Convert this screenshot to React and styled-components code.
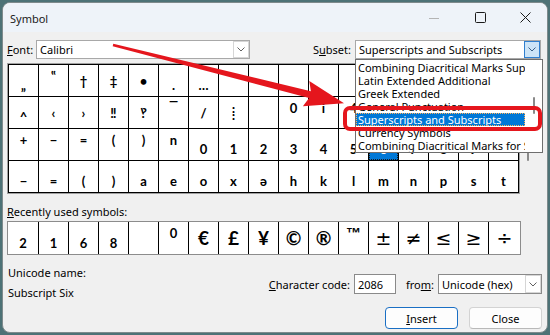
import React from 'react';
import styled, { createGlobalStyle } from 'styled-components';

const Global = createGlobalStyle`
  html, body { margin: 0; padding: 0; }
  body {
    background: #4d7276;
    width: 550px; height: 335px; overflow: hidden;
    font-family: "Noto Sans", "Open Sans", sans-serif;
  }
`;

const UI = `"Segoe UI", "Noto Sans", "Open Sans", sans-serif`;
const GLYPH = `Lato, "DejaVu Sans", sans-serif`;

const Page = styled.div`
  position: relative;
  width: 550px; height: 335px;
  padding: 2px;
  box-sizing: border-box;
`;

const Window = styled.div`
  width: 546px; height: 331px;
  box-sizing: border-box;
  border: 1px solid #7e8a8c;
  border-radius: 8px;
  overflow: hidden;
  background: #f0f0f0;
  display: flex; flex-direction: column;
  font-family: ${UI};
  font-size: 11px;
  color: #000;
`;

const TitleBar = styled.div`
  height: 29px; flex: none;
  display: flex; align-items: center;
  background: #eef3f9;
  padding-left: 7px;
`;
const Title = styled.div`
  flex: 1;
  font-size: 11px;
  color: #1a1a1a;
  margin-top: 1px;
`;
const WinBtn = styled.div`
  width: ${p => p.$w || 46}px; height: 29px;
  display: flex; align-items: center; justify-content: center;
`;

const Body = styled.div`
  flex: 1;
  display: flex; flex-direction: column;
  padding: 0 5px 0 4px;
`;

const TopRow = styled.div`
  margin-top: 8px;
  height: 19px;
  display: flex; align-items: center; justify-content: space-between;
`;
const Group = styled.div`
  display: flex; align-items: center;
`;
const Label = styled.span`
  margin-right: ${p => p.$mr ?? 3}px;
  white-space: nowrap;
`;

const Combo = styled.div`
  display: flex; align-items: stretch;
  width: ${p => p.$w}px; height: ${p => p.$h || 19}px;
  box-sizing: border-box;
  background: #fff;
  border: 1px solid ${p => p.$dark ? '#8a8a8a' : '#a8a8a8'};
  margin-right: ${p => p.$mr || 0}px;
`;
const ComboText = styled.div`
  flex: 1;
  padding-left: 3px;
  display: flex; align-items: center;
  white-space: nowrap; overflow: hidden;
`;
const ComboButton = styled.div`
  width: 16px;
  display: flex; align-items: center; justify-content: center;
  box-sizing: border-box;
  background: ${p => p.$active ? '#cce4f7' : '#fff'};
  border: 1px solid ${p => p.$active ? '#2f7fcf' : '#d6d6d6'};
`;

const Chevron = ({ color = '#606060' }) => (
  <svg width="8" height="5" viewBox="0 0 8 5">
    <path d="M0.5 0.5 L4 4 L7.5 0.5" fill="none" stroke={color} strokeWidth="1" />
  </svg>
);

const GridSection = styled.div`
  margin-top: 4px;
  display: flex;
`;
const GridFrame = styled.div`
  border: 1px solid #a0a0a0;
  flex: none;
`;
const Grid = styled.div`
  display: grid;
  grid-template-columns: repeat(17, 29px);
  grid-auto-rows: 31px;
  gap: 1px;
  background: #000;
  border: 1px solid #000;
`;
const ScrollArea = styled.div`
  flex: 1;
  display: flex;
  padding-left: 7px;
  padding-top: 40px;
`;
const Thumb = styled.div`
  width: 2px; height: 58px;
  border-radius: 1px;
  background: #8a8a8a;
`;

const Cell = styled.div`
  background: ${p => p.$sel ? '#0078d7' : '#fff'};
  color: ${p => p.$sel ? '#fff' : '#000'};
  display: flex; justify-content: center;
  align-items: ${p => p.$v === 'bot' ? 'flex-end' : p.$v === 'top' ? 'flex-start' : 'center'};
  padding: ${p => p.$v === 'top' ? '4px 0 0' : p.$v === 'bot' ? '0 0 4px' : '0'};
  box-sizing: border-box;
  font-family: ${GLYPH};
  font-weight: 700;
  font-size: 13px;
  line-height: 14px;
  ${p => p.$sel && 'outline: 1px dotted #1a1a1a; outline-offset: -1px;'}
`;

const Glyph = styled.span`
  font-size: ${p => p.$k === 'big' ? 19 : p.$k === 'math' ? 19 : p.$k === 'tm' ? 15 : 13}px;
  font-weight: ${p => p.$k === 'math' ? 400 : 700};
  font-family: ${p => p.$k === 'math' ? `"DejaVu Sans", sans-serif` : p.$k === 'tm' ? `"Liberation Sans", Arial, sans-serif` : GLYPH};
  line-height: 14px;
`;

const RecentLabel = styled.div`
  margin-top: 10px;
  line-height: 16px;
`;
const RecentFrame = styled.div`
  margin-top: 1px;
  border: 1px solid #8c8c8c;
  align-self: flex-start;
`;
const RecentRow = styled.div`
  display: grid;
  grid-template-columns: 30px repeat(15, 29px) 31px;
  grid-auto-rows: 32px;
  gap: 1px;
  background: #000;
`;

const Bottom = styled.div`
  display: flex;
  justify-content: space-between;
`;
const InfoCol = styled.div`
  padding-top: 10px;
  display: flex; flex-direction: column; gap: 4px;
  line-height: 16px;
  padding-left: 1px;
`;
const ActionCol = styled.div`
  display: flex; flex-direction: column; align-items: flex-end;
  padding-top: 19px;
`;
const CodeRow = styled.div`
  display: flex; align-items: center;
  height: 20px;
`;
const TextBox = styled.div`
  width: ${p => p.$w}px; height: 20px;
  box-sizing: border-box;
  border: 1px solid #8a8a8a;
  background: #fff;
  padding-left: 3px;
  display: flex; align-items: center;
  margin-right: ${p => p.$mr || 0}px;
`;
const ButtonRow = styled.div`
  margin-top: 13px;
  display: flex; gap: 11px;
`;
const Button = styled.div`
  width: 73px; height: 22px;
  box-sizing: border-box;
  border-radius: 4px;
  background: #fdfdfd;
  border: 1px solid ${p => p.$primary ? '#1a6fc4' : '#d3d3d3'};
  ${p => !p.$primary && 'border-bottom-color: #b9b9b9;'}
  display: flex; align-items: center; justify-content: center;
`;

/* overlays */
const DropList = styled.div`
  position: absolute;
  left: 355px; top: 59px;
  width: 188px; height: 94px;
  box-sizing: border-box;
  background: #fff;
  border: 1px solid #6e6e6e;
  display: flex;
  font-family: ${UI};
  font-size: 11px;
`;
const ListItems = styled.div`
  width: 169px;
  padding-top: 1px;
  overflow: hidden;
`;
const ListItem = styled.div`
  height: 13px; line-height: 13px;
  padding-left: 2px;
  white-space: nowrap;
  box-sizing: border-box;
  background: ${p => p.$sel ? '#0078d7' : 'transparent'};
  color: ${p => p.$sel ? '#fff' : '#000'};
  ${p => p.$sel && 'outline: 1px dotted #ffb35a; outline-offset: -1px;'}
`;
const ListScroll = styled.div`
  flex: 1;
  display: flex; justify-content: center;
  padding-top: 37px;
`;
const ListThumb = styled.div`
  width: 2px; height: 17px;
  background: #8a8a8a;
  border-radius: 1px;
`;

const Highlight = styled.div`
  position: absolute;
  left: 343px; top: 106px;
  width: 199px; height: 25px;
  box-sizing: border-box;
  border: 4px solid #e5161d;
  border-radius: 7px;
`;

const ArrowLayer = styled.svg`
  position: absolute;
  left: 0; top: 0;
  pointer-events: none;
`;

const B = '';
const row1 = [['„', 'bot'], ['‟', 'top'], ['†', 'mid'], ['‡', 'mid'], ['•', 'mid'], ['.', 'bot'], ['…', 'bot'],
  [B], [B], [B], [B], [B], [B], [B], [B], [B], [B]];
const row2 = [['^', 'bot'], ['‹', 'mid'], ['›', 'mid'], ['‼', 'mid'], ['‽', 'mid'], ['‾', 'top'], ['/', 'mid'], ['⁞', 'mid'],
  [B], ['0', 'top'], ['i', 'top'], ['4', 'top'], ['5', 'top'], ['6', 'top'], ['7', 'top'], ['8', 'top'], ['9', 'top']];
const row3 = [['+', 'top'], ['−', 'top'], ['=', 'top'], ['(', 'top'], [')', 'top'], ['n', 'top'],
  ['0', 'bot'], ['1', 'bot'], ['2', 'bot'], ['3', 'bot'], ['4', 'bot'], ['5', 'bot'], ['6', 'bot', true], ['7', 'bot'], ['8', 'bot'], ['9', 'bot'], ['+', 'bot']];
const row4 = ['−', '=', '(', ')', 'a', 'e', 'o', 'x', 'ə', 'h', 'k', 'l', 'm', 'n', 'p', 's', 't'].map(c => [c, 'bot']);
const cells = [...row1, ...row2, ...row3, ...row4];

const recent = [['2', 'bot'], ['1', 'bot'], ['6', 'bot'], ['8', 'bot'], [B, 'mid'], ['0', 'top'],
  ['€', 'mid', 'big'], ['£', 'mid', 'big'], ['¥', 'mid', 'big'], ['©', 'mid', 'big'], ['®', 'mid', 'big'],
  ['™', 'top', 'tm'], ['±', 'mid', 'math'], ['≠', 'mid', 'math'], ['≤', 'mid', 'math'], ['≥', 'mid', 'math'], ['÷', 'mid', 'math']];

const subsets = ['Combining Diacritical Marks Supplement', 'Latin Extended Additional', 'Greek Extended',
  'General Punctuation', 'Superscripts and Subscripts', 'Currency Symbols', 'Combining Diacritical Marks for Symbols'];

export default function App() {
  return (
    <Page>
      <Global />
      <Window>
        <TitleBar>
          <Title>Symbol</Title>
          <WinBtn>
            <svg width="10" height="10" viewBox="0 0 10 10"><path d="M0 5.5 H10" stroke="#b4b4b4" strokeWidth="1" /></svg>
          </WinBtn>
          <WinBtn>
            <svg width="11" height="11" viewBox="0 0 11 11"><rect x="0.5" y="0.5" width="10" height="10" rx="1" fill="none" stroke="#1a1a1a" strokeWidth="1" /></svg>
          </WinBtn>
          <WinBtn $w={44}>
            <svg width="11" height="11" viewBox="0 0 11 11"><path d="M0.5 0.5 L10.5 10.5 M10.5 0.5 L0.5 10.5" stroke="#1a1a1a" strokeWidth="1" /></svg>
          </WinBtn>
        </TitleBar>
        <Body>
          <TopRow>
            <Group>
              <Label $mr={3}><u>F</u>ont:</Label>
              <Combo $w={214}>
                <ComboText>Calibri</ComboText>
                <ComboButton><Chevron /></ComboButton>
              </Combo>
            </Group>
            <Group>
              <Label $mr={4}>S<u>u</u>bset:</Label>
              <Combo $w={186} $mr={1}>
                <ComboText>Superscripts and Subscripts</ComboText>
                <ComboButton $active><Chevron color="#3a5f86" /></ComboButton>
              </Combo>
            </Group>
          </TopRow>
          <GridSection>
            <GridFrame>
              <Grid>
                {cells.map(([c, v, sel], i) => (
                  <Cell key={i} $v={v} $sel={sel}>{c}</Cell>
                ))}
              </Grid>
            </GridFrame>
            <ScrollArea><Thumb /></ScrollArea>
          </GridSection>
          <RecentLabel><u>R</u>ecently used symbols:</RecentLabel>
          <RecentFrame>
            <RecentRow>
              {recent.map(([c, v, k], i) => (
                <Cell key={i} $v={v}><Glyph $k={k}>{c}</Glyph></Cell>
              ))}
            </RecentRow>
          </RecentFrame>
          <Bottom>
            <InfoCol>
              <div>Unicode name:</div>
              <div>Subscript Six</div>
            </InfoCol>
            <ActionCol>
              <CodeRow>
                <Label $mr={4}><u>C</u>haracter code:</Label>
                <TextBox $w={42} $mr={10}>2086</TextBox>
                <Label $mr={4}>fro<u>m</u>:</Label>
                <Combo $w={104} $h={20} $dark>
                  <ComboText>Unicode (hex)</ComboText>
                  <ComboButton><Chevron /></ComboButton>
                </Combo>
              </CodeRow>
              <ButtonRow>
                <Button $primary><u>I</u>nsert</Button>
                <Button>Close</Button>
              </ButtonRow>
            </ActionCol>
          </Bottom>
        </Body>
      </Window>

      <DropList>
        <ListItems>
          {subsets.map((s, i) => (
            <ListItem key={s} $sel={i === 4}>{s}</ListItem>
          ))}
        </ListItems>
        <ListScroll><ListThumb /></ListScroll>
      </DropList>
      <Highlight />
      <ArrowLayer width="550" height="335" viewBox="0 0 550 335">
        <polygon
          points="113.3,43.8 310.9,91.3 309.3,81.1 344,103.2 302.9,106.3 309.1,98.1 112.7,46.2"
          fill="#e5161d"
        />
      </ArrowLayer>
    </Page>
  );
}
